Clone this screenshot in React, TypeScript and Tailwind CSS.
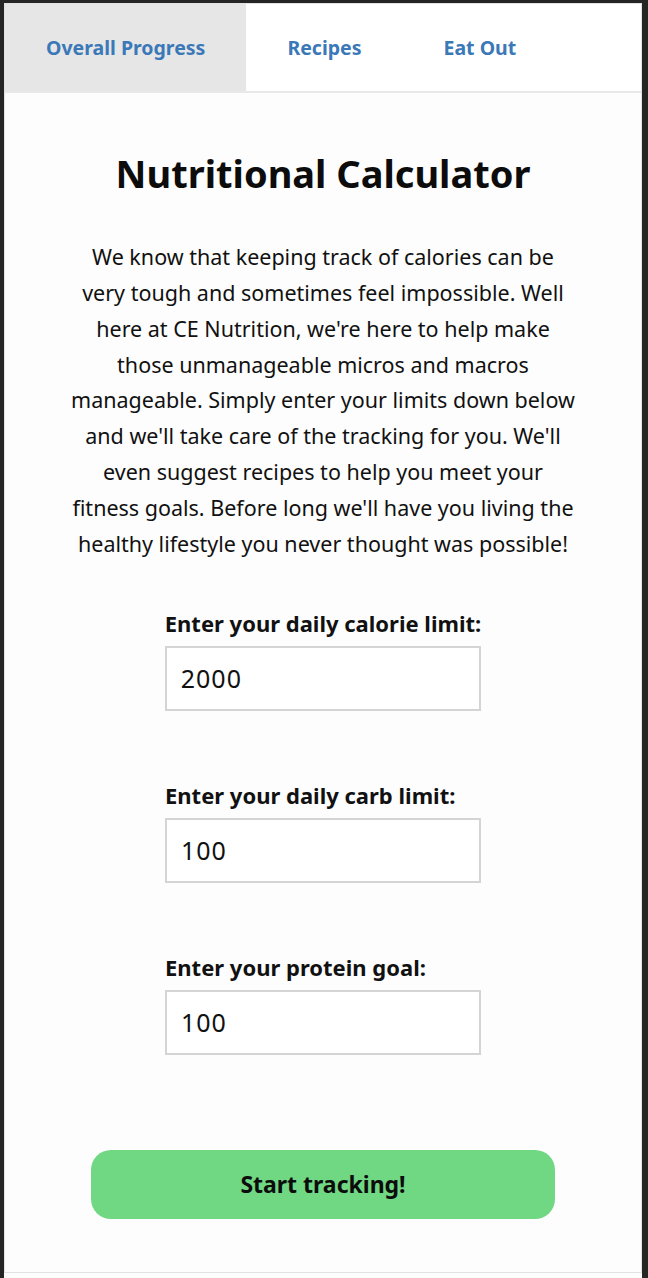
import { useState } from "react";

const intro = [
  "We know that keeping track of calories can be",
  "very tough and sometimes feel impossible. Well",
  "here at CE Nutrition, we're here to help make",
  "those unmanageable micros and macros",
  "manageable. Simply enter your limits down below",
  "and we'll take care of the tracking for you. We'll",
  "even suggest recipes to help you meet your",
  "fitness goals. Before long we'll have you living the",
  "healthy lifestyle you never thought was possible!",
];

type FieldProps = {
  label: string;
  value: string;
  onChange: (v: string) => void;
};

const Field = ({ label, value, onChange }: FieldProps) => (
  <div className="flex flex-col items-start">
    <label className="whitespace-nowrap text-[22px] font-bold leading-[28px] text-[#111]">{label}</label>
    <input
      value={value}
      onChange={(e) => onChange(e.target.value)}
      className="mt-[9px] h-[65px] w-[316px] border-2 border-[#d4d4d4] bg-white px-[14px] text-[25px] tracking-[1px] text-[#111] outline-none"
    />
  </div>
);

export default function App() {
  const [tab, setTab] = useState(0);
  const [calories, setCalories] = useState("2000");
  const [carbs, setCarbs] = useState("100");
  const [protein, setProtein] = useState("100");

  const tabs = ["Overall Progress", "Recipes", "Eat Out"];

  return (
    <div
      className="min-h-[1278px] bg-[#252525] pt-[3px] pl-[4px] pr-[6px]"
      style={{ fontFamily: '"Noto Sans", "Open Sans", sans-serif' }}
    >
      <div className="h-[1275px] bg-[#fdfdfd]">
        <div className="h-[1270px] border border-[#e2e2e2]">
          <nav className="flex h-[89px] border-b-2 border-[#e8e8e8] bg-white">
            {tabs.map((t, i) => (
              <button
                key={t}
                onClick={() => setTab(i)}
                className={`px-[41px] pt-[1px] text-[19.5px] font-bold text-[#3b78b8] ${
                  tab === i ? "bg-[#e6e6e6]" : "bg-white"
                }`}
              >
                {t}
              </button>
            ))}
          </nav>

          <main className="flex flex-col items-center">
            <h1 className="mt-[55px] text-[38px] font-bold leading-[50px] text-[#0c0c0c]">
              Nutritional Calculator
            </h1>
            <p className="mt-[41px] text-center text-[21.5px] leading-[35.85px] text-[#111]">
              {intro.map((line) => (
                <span key={line} className="block whitespace-nowrap">
                  {line}
                </span>
              ))}
            </p>

            <div className="mt-[47px] flex flex-col items-center gap-[70px]">
              <Field label="Enter your daily calorie limit:" value={calories} onChange={setCalories} />
              <Field label="Enter your daily carb limit:" value={carbs} onChange={setCarbs} />
              <Field label="Enter your protein goal:" value={protein} onChange={setProtein} />
            </div>

            <button className="mt-[95px] h-[69px] w-[464px] rounded-[20px] bg-[#70d783] text-[23px] font-bold text-[#0c0c0c]">
              Start tracking!
            </button>
          </main>
        </div>
      </div>
    </div>
  );
}
